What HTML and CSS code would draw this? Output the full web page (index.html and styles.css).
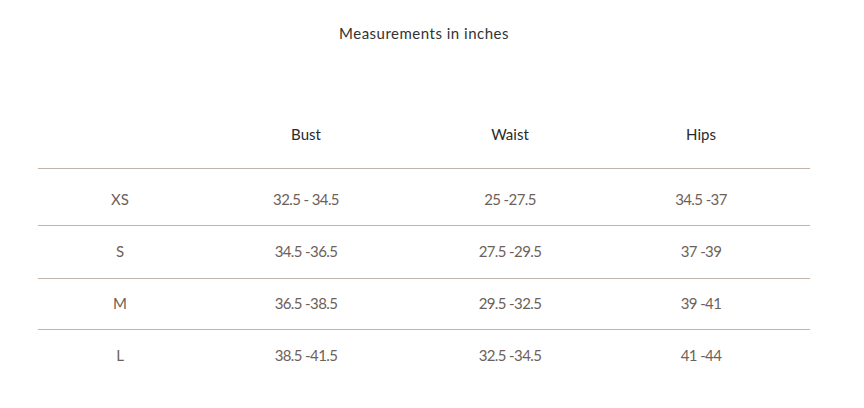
FILE: index.html
```html
<!DOCTYPE html>
<html lang="en">
<head>
<meta charset="utf-8">
<title>Size chart</title>
<link rel="stylesheet" href="styles.css">
</head>
<body>
<main class="chart">
  <h1 class="title">Measurements in inches</h1>
  <table class="sizes">
    <colgroup>
      <col class="c-size"><col class="c-bust"><col class="c-waist"><col class="c-hips">
    </colgroup>
    <thead>
      <tr class="head">
        <th></th><th>Bust</th><th>Waist</th><th class="last">Hips</th>
      </tr>
    </thead>
    <tbody>
      <tr class="r1"><td>XS</td><td class="num">32.5 - 34.5</td><td class="num">25 -27.5</td><td class="num last">34.5 -37</td></tr>
      <tr class="r2"><td>S</td><td class="num">34.5 -36.5</td><td class="num">27.5 -29.5</td><td class="num last">37 -39</td></tr>
      <tr class="r3"><td>M</td><td class="num">36.5 -38.5</td><td class="num">29.5 -32.5</td><td class="num last">39 -41</td></tr>
      <tr class="r4"><td>L</td><td class="num">38.5 -41.5</td><td class="num">32.5 -34.5</td><td class="num last">41 -44</td></tr>
    </tbody>
  </table>
</main>
</body>
</html>
```
FILE: styles.css
```css
html, body {
  margin: 0;
  padding: 0;
  background: #ffffff;
}
body {
  font-family: "Lato", "Open Sans", "Liberation Sans", sans-serif;
  width: 864px;
  height: 408px;
  overflow: hidden;
}
.title {
  margin: 23px 0 0;
  padding-right: 16px;
  font-size: 15px;
  line-height: 20px;
  font-weight: 400;
  letter-spacing: 0.5px;
  color: #333333;
  text-align: center;
}
.sizes {
  margin: 57px 0 0 38px;
  width: 772px;
  border-collapse: collapse;
  table-layout: fixed;
  font-size: 15px;
  line-height: 20px;
}
.c-size { width: 164px; }
.c-bust { width: 208px; }
.c-waist { width: 200px; }
.c-hips { width: 200px; }
.sizes th, .sizes td {
  padding: 0;
  text-align: center;
  font-weight: 400;
}
.sizes th {
  color: #2a2a2a;
}
.sizes td {
  color: #6e5f5a;
}
.sizes .num { letter-spacing: -0.6px; }
.sizes .last { padding-right: 18px; }
.head th { padding-top: 24px; padding-bottom: 24px; }
.head, .r1, .r2, .r3 { border-bottom: 1px solid #bfb3ac; }
.r1 td { padding-top: 20px; padding-bottom: 16px; }
.r2 td { padding-top: 15px; padding-bottom: 17px; }
.r3 td { padding-top: 14px; padding-bottom: 16px; }
.r4 td { padding-top: 15px; padding-bottom: 16px; }
```
